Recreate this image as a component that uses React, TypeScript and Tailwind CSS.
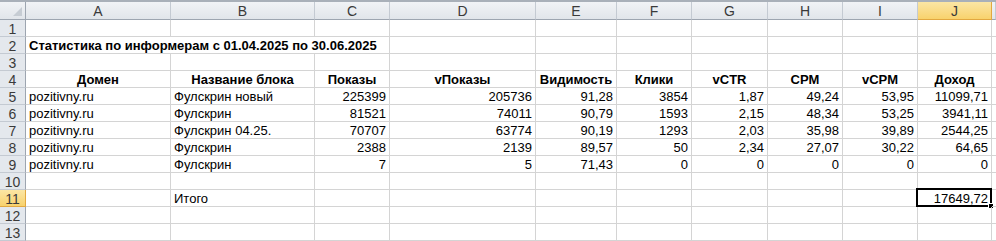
import React from 'react';

type Align = 'l' | 'c' | 'r';

interface Cell {
  text?: string;
  align?: Align;
  bold?: boolean;
  span?: number;
}

const COLS = ['A', 'B', 'C', 'D', 'E', 'F', 'G', 'H', 'I', 'J', ''];
const ACTIVE_COL = 'J';
const ACTIVE_ROW = 11;

const dataRows: [string, string, string, string, string, string, string, string, string, string][] = [
  ['pozitivny.ru', 'Фулскрин новый', '225399', '205736', '91,28', '3854', '1,87', '49,24', '53,95', '11099,71'],
  ['pozitivny.ru', 'Фулскрин', '81521', '74011', '90,79', '1593', '2,15', '48,34', '53,25', '3941,11'],
  ['pozitivny.ru', 'Фулскрин 04.25.', '70707', '63774', '90,19', '1293', '2,03', '35,98', '39,89', '2544,25'],
  ['pozitivny.ru', 'Фулскрин', '2388', '2139', '89,57', '50', '2,34', '27,07', '30,22', '64,65'],
  ['pozitivny.ru', 'Фулскрин', '7', '5', '71,43', '0', '0', '0', '0', '0'],
];

const headers = ['Домен', 'Название блока', 'Показы', 'vПоказы', 'Видимость', 'Клики', 'vCTR', 'CPM', 'vCPM', 'Доход'];

const empty = (): Cell[] => COLS.map(() => ({}));

function buildRows(): Cell[][] {
  const rows: Cell[][] = [];
  rows.push(empty());
  rows.push([
    { text: 'Статистика по информерам с 01.04.2025 по 30.06.2025', bold: true, span: 3 },
    ...COLS.slice(3).map(() => ({})),
  ]);
  rows.push(empty());
  rows.push([...headers.map((h) => ({ text: h, bold: true, align: 'c' as Align })), {}]);
  dataRows.forEach((r) => {
    rows.push([
      { text: r[0] },
      { text: r[1] },
      ...r.slice(2).map((v) => ({ text: v, align: 'r' as Align })),
      {},
    ]);
  });
  rows.push(empty());
  const total = empty();
  total[1] = { text: 'Итого' };
  total[9] = { text: '17649,72', align: 'r' };
  rows.push(total);
  rows.push(empty());
  rows.push(empty());
  return rows;
}

const gridCols = 'grid-cols-[26px_145px_144px_75px_146px_81px_75px_76px_75px_75px_74px_1fr]';

export default function App() {
  const rows = buildRows();

  return (
    <div className="w-[996px] h-[241px] overflow-hidden bg-white font-['Liberation_Sans',Arial,sans-serif] text-[13px] leading-none text-black border-t-2 border-[#a9b0b9]">
      {/* column letters */}
      <div className={`grid ${gridCols} grid-rows-[18px] h-[18px]`}>
        <div className="relative bg-gradient-to-b from-[#f1f3f6] to-[#e1e5ea] border-r border-b border-[#9da5b0]">
          <div className="absolute right-[3px] bottom-[3px] w-0 h-0 border-l-[9px] border-l-transparent border-b-[9px] border-b-[#c6ccd3]" />
        </div>
        {COLS.map((c, i) =>
          c === ACTIVE_COL ? (
            <div
              key={i}
              className="flex items-center justify-center pt-px bg-gradient-to-b from-[#fbe6a4] to-[#f8d26c] border-r border-b border-[#e2a840] text-[14px] text-[#3a3a3a]"
            >
              {c}
            </div>
          ) : (
            <div
              key={i}
              className="flex items-center justify-center pt-px bg-gradient-to-b from-[#f1f3f6] to-[#e1e5ea] border-r border-b border-r-[#c4cad2] border-b-[#9da5b0] text-[14px] text-[#3a3a3a]"
            >
              {c}
            </div>
          )
        )}
      </div>

      {rows.map((row, ri) => {
        const num = ri + 1;
        const activeRow = num === ACTIVE_ROW;
        let colIdx = 0;
        return (
          <div key={ri} className={`grid ${gridCols} grid-rows-[17px] h-[17px]`}>
            <div
              className={
                activeRow
                  ? 'flex items-center justify-center pt-px bg-gradient-to-b from-[#fbe6a4] to-[#f8d26c] border-r border-b border-[#e2a840] text-[14px] text-[#3a3a3a]'
                  : 'flex items-center justify-center pt-px bg-[#e4e8ed] border-r border-b border-r-[#9da5b0] border-b-[#c4cad2] text-[14px] text-[#3a3a3a]'
              }
            >
              {num}
            </div>
            {row.map((cell, ci) => {
              const span = cell.span ?? 1;
              const isActive = activeRow && COLS[colIdx] === ACTIVE_COL;
              colIdx += span;
              const align =
                cell.align === 'r' ? 'justify-end' : cell.align === 'c' ? 'justify-center' : 'justify-start';
              return (
                <div
                  key={ci}
                  className={`relative flex items-center pt-px px-[3px] whitespace-nowrap border-r border-b border-[#d4d4d4] ${align} ${
                    cell.bold ? 'font-bold' : ''
                  } ${span === 3 ? 'col-span-3' : ''}`}
                >
                  {cell.text}
                  {isActive && (
                    <>
                      <div className="absolute -left-[2px] -top-[2px] -right-[1px] -bottom-[1px] border-2 border-black" />
                      <div className="absolute -right-[3px] -bottom-[3px] w-[6px] h-[6px] bg-black border border-white" />
                    </>
                  )}
                </div>
              );
            })}
          </div>
        );
      })}
    </div>
  );
}
